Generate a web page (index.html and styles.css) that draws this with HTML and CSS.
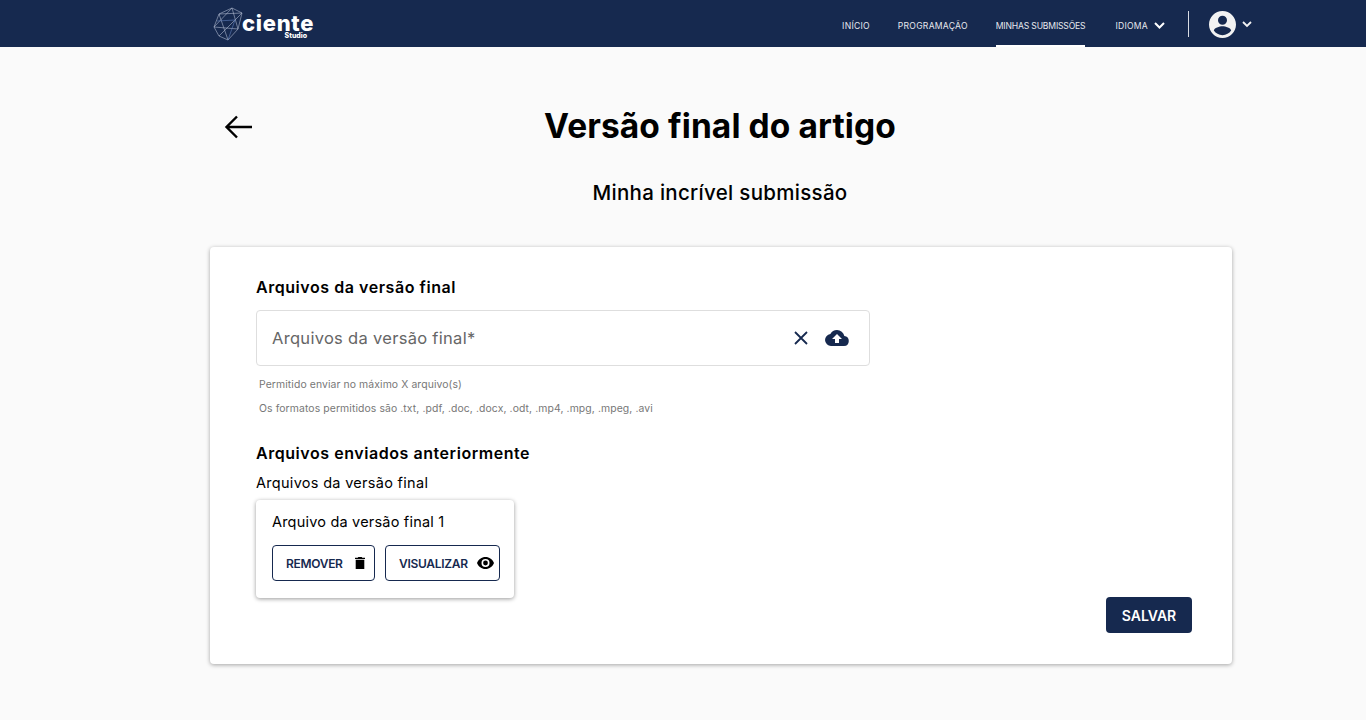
FILE: index.html
```html
<!DOCTYPE html>
<html lang="pt-BR">
<head>
    <meta charset="UTF-8">
    <meta name="viewport" content="width=device-width, initial-scale=1.0">
    <title>Versão final do artigo - Ciente Studio</title>
    <link rel="stylesheet" href="styles.css">
</head>
<body>
    <header class="topbar">
        <a href="#" class="logo">
            <svg class="logo-mark" width="30" height="34" viewBox="0 0 30 34" fill="none" stroke="#aeb9cf" stroke-width="0.6">
                <path d="M1 20 L6 7 L19 1 L29 6 L25 22 L15 33 L6 29 Z"/>
                <path d="M6 7 L29 6 M19 1 L25 22 M1 20 L25 22 M6 7 L15 33 M1 20 L19 1 M6 29 L29 6"/>
                <path d="M4 14 L22 13 L15 33" stroke="#5f80bd"/>
            </svg>
            <span class="logo-text">
                <span class="logo-name">ciente</span>
                <span class="logo-sub">Studio</span>
            </span>
        </a>
        <nav class="nav">
            <a href="#" class="nav-link">INÍCIO</a>
            <a href="#" class="nav-link">PROGRAMAÇÃO</a>
            <a href="#" class="nav-link active">MINHAS SUBMISSÕES</a>
            <a href="#" class="nav-link nav-lang">IDIOMA
                <svg width="11" height="7" viewBox="0 0 11 7" fill="none" stroke="#fff" stroke-width="2"><path d="M1 1l4.5 4.5L10 1"/></svg>
            </a>
            <span class="nav-divider"></span>
            <a href="#" class="nav-user">
                <svg width="27" height="27" viewBox="0 0 24 24" fill="#f2f2f2"><path d="M12 0C5.4 0 0 5.4 0 12s5.400 12 12 12 12-5.400 12-12S18.600 0 12 0zm0 4.200a4 4 0 1 1 0 8 4 4 0 0 1 0-8zm0 17.300c-3.200 0-6-1.600-7.700-4.100.1-2.500 5.100-3.900 7.700-3.900s7.600 1.400 7.700 3.900c-1.700 2.500-4.500 4.100-7.700 4.100z"/></svg>
                <svg width="10" height="7" viewBox="0 0 10 7" fill="none" stroke="#f2f2f2" stroke-width="1.800"><path d="M1 1l4 4 4-4"/></svg>
            </a>
        </nav>
    </header>

    <main class="page">
        <div class="page-head">
            <a href="#" class="back-btn">
                <svg width="28" height="24" viewBox="0 0 28 24" fill="none" stroke="#000" stroke-width="2.400"><path d="M28 12H2M13 1.500 2.500 12 13 22.500"/></svg>
            </a>
            <h1>Versão final do artigo</h1>
        </div>
        <p class="subtitle">Minha incrível submissão</p>

        <section class="card">
            <h2>Arquivos da versão final</h2>
            <div class="file-input">
                <span class="file-placeholder">Arquivos da versão final*</span>
                <svg class="clear-icon" width="14" height="14" viewBox="0 0 14 14" fill="none" stroke="#16294f" stroke-width="1.800"><path d="M1 1l12 12M13 1 1 13"/></svg>
                <svg width="24" height="16" viewBox="0 0 24 16" fill="#16294f"><path d="M19.350 6.040A7.490 7.490 0 0 0 12 0 7.500 7.500 0 0 0 5.350 4.040 6 6 0 0 0 6 16h13a5 5 0 0 0 .35-9.960zM14 9v4h-4V9H7l5-5 5 5h-3z"/></svg>
            </div>
            <p class="hint">Permitido enviar no máximo X arquivo(s)</p>
            <p class="hint">Os formatos permitidos são .txt, .pdf, .doc, .docx, .odt, .mp4, .mpg, .mpeg, .avi</p>

            <h2 class="sent-title">Arquivos enviados anteriormente</h2>
            <p class="sent-label">Arquivos da versão final</p>

            <div class="file-card">
                <p class="file-name">Arquivo da versão final 1</p>
                <div class="file-actions">
                    <a href="#" class="outline-btn remove-btn">REMOVER
                        <svg width="10" height="12" viewBox="0 0 10 12" fill="#000"><path d="M3.300 0h3.400l.6.7H10V2H0V.7h2.700zM.7 2.700h8.600V12H.7z"/></svg>
                    </a>
                    <a href="#" class="outline-btn view-btn">VISUALIZAR
                        <svg width="17" height="12" viewBox="0 0 17 12" fill="#000"><path fill-rule="evenodd" d="M8.500 0C4.600 0 1.400 2.500 0 6c1.400 3.500 4.600 6 8.500 6s7.100-2.500 8.500-6c-1.400-3.500-4.600-6-8.500-6zm0 10a4 4 0 1 1 0-8 4 4 0 0 1 0 8zm0-6.400a2.400 2.400 0 1 0 0 4.800 2.400 2.400 0 0 0 0-4.800z"/></svg>
                    </a>
                </div>
            </div>

            <div class="card-footer">
                <button class="save-btn">SALVAR</button>
            </div>
        </section>
    </main>
</body>
</html>
```

FILE: styles.css
```css
* {
    margin: 0;
    padding: 0;
    box-sizing: border-box;
}

body {
    font-family: Inter, "Open Sans", sans-serif;
    background: #fafafa;
    color: #000;
    min-height: 720px;
    overflow: hidden;
}

a {
    text-decoration: none;
    color: inherit;
}

.topbar {
    height: 47px;
    background: #16294f;
    display: flex;
    align-items: center;
    justify-content: space-between;
    padding: 0 114px 0 213px;
}

.logo {
    display: flex;
    align-items: center;
    color: #fff;
}

.logo-text {
    display: flex;
    flex-direction: column;
    margin-left: -1px;
    padding-top: 6px;
}

.logo-name {
    font-size: 22px;
    font-weight: 800;
    line-height: 16px;
    letter-spacing: 0.7px;
}

.logo-sub {
    font-size: 7px;
    font-weight: 800;
    line-height: 7px;
    text-align: right;
    margin-right: 7px;
    margin-top: 1px;
}

.nav {
    display: flex;
    align-items: center;
    height: 47px;
    color: #e6e8ee;
}

.nav-link {
    display: flex;
    align-items: center;
    height: 47px;
    padding-top: 6px;
    font-size: 8.6px;
    letter-spacing: 0.25px;
    margin-right: 28px;
    border-bottom: 2px solid transparent;
}

.nav-link.active {
    border-bottom-color: #fff;
    letter-spacing: -0.18px;
    margin-right: 30px;
}

.nav-lang {
    gap: 6px;
    margin-right: 23px;
}

.nav-divider {
    width: 1px;
    height: 26px;
    background: #d8dce4;
    margin-right: 20px;
}

.nav-user {
    display: flex;
    align-items: center;
    gap: 6px;
    padding-top: 2px;
}

.page {
    width: 1022px;
    margin-left: 210px;
}

.page-head {
    position: relative;
    padding-top: 56px;
    text-align: center;
}

.back-btn {
    position: absolute;
    left: 14px;
    top: 68px;
}

h1 {
    font-size: 33.500px;
    font-weight: 700;
    line-height: 46px;
    letter-spacing: 0.1px;
    margin-right: 2px;
}

.subtitle {
    margin-top: 30px;
    margin-right: 2px;
    text-align: center;
    font-size: 20.500px;
    font-weight: 500;
    line-height: 28px;
    letter-spacing: 0.3px;
}

.card {
    margin-top: 40px;
    height: 417px;
    background: #fff;
    border-radius: 4px;
    box-shadow: 0 1px 4px rgba(0, 0, 0, 0.35);
    padding: 28px 40px 0 46px;
}

h2 {
    font-size: 16px;
    font-weight: 600;
    line-height: 24px;
    letter-spacing: 0.55px;
}

.file-input {
    width: 614px;
    height: 56px;
    margin-top: 11px;
    margin-bottom: 12px;
    border: 1px solid #dedede;
    border-radius: 4px;
    display: flex;
    align-items: center;
    padding: 0 20px 0 15px;
}

.file-placeholder {
    flex: 1;
    font-size: 16.500px;
    letter-spacing: 0.3px;
    color: #666;
}

.clear-icon {
    margin-right: 17px;
}

.hint {
    font-size: 10.400px;
    line-height: 14px;
    letter-spacing: 0.1px;
    color: #777;
    margin-left: 3px;
    margin-bottom: 10px;
}

.sent-title {
    margin-top: 25px;
}

.sent-label {
    font-size: 14.500px;
    line-height: 22px;
    letter-spacing: 0.3px;
    margin-top: 7px;
}

.file-card {
    width: 258px;
    height: 98px;
    margin-top: 6px;
    background: #fff;
    border-radius: 4px;
    box-shadow: 0 1px 4px rgba(0, 0, 0, 0.4);
    padding: 12px 14px 0 16px;
}

.file-name {
    font-size: 14.500px;
    line-height: 20px;
    letter-spacing: 0.2px;
}

.file-actions {
    display: flex;
    gap: 10px;
    margin-top: 13px;
}

.outline-btn {
    display: flex;
    align-items: center;
    justify-content: space-between;
    height: 36px;
    border: 1px solid #16294f;
    border-radius: 4px;
    font-size: 12px;
    font-weight: 600;
    letter-spacing: -0.3px;
    color: #16294f;
}

.remove-btn {
    width: 103px;
    padding: 0 9px 0 13px;
}

.view-btn {
    width: 115px;
    padding: 0 5px 0 13px;
}

.card-footer {
    display: flex;
    justify-content: flex-end;
    margin-top: -1px;
}

.save-btn {
    width: 86px;
    height: 36px;
    border: none;
    border-radius: 4px;
    background: #16294f;
    color: #fff;
    font-family: inherit;
    font-size: 14px;
    font-weight: 600;
}
```
